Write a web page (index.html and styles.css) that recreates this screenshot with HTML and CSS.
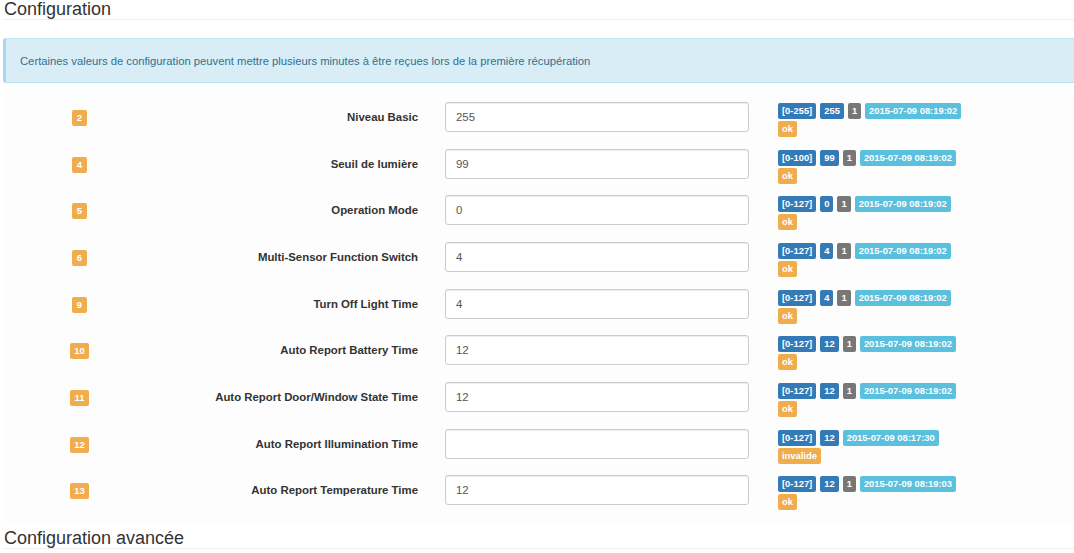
FILE: index.html
```html
<!DOCTYPE html>
<html lang="fr">
<head>
<meta charset="utf-8">
<link rel="stylesheet" href="styles.css">
</head>
<body>
<div class="page">
  <h3 class="title">Configuration</h3>
  <div class="alert">Certaines valeurs de configuration peuvent mettre plusieurs minutes à être reçues lors de la première récupération</div>
  <div class="rows">
    <div class="row"><div class="idx"><span class="lbl warn">2</span></div><div class="name">Niveau Basic</div><div class="field"><div class="input">255</div></div><div class="status"><span class="lbl primary">[0-255]</span><span class="lbl primary">255</span><span class="lbl default">1</span><span class="lbl info">2015-07-09 08:19:02</span><br><span class="lbl warn">ok</span></div></div>
    <div class="row"><div class="idx"><span class="lbl warn">4</span></div><div class="name">Seuil de lumière</div><div class="field"><div class="input">99</div></div><div class="status"><span class="lbl primary">[0-100]</span><span class="lbl primary">99</span><span class="lbl default">1</span><span class="lbl info">2015-07-09 08:19:02</span><br><span class="lbl warn">ok</span></div></div>
    <div class="row"><div class="idx"><span class="lbl warn">5</span></div><div class="name">Operation Mode</div><div class="field"><div class="input">0</div></div><div class="status"><span class="lbl primary">[0-127]</span><span class="lbl primary">0</span><span class="lbl default">1</span><span class="lbl info">2015-07-09 08:19:02</span><br><span class="lbl warn">ok</span></div></div>
    <div class="row"><div class="idx"><span class="lbl warn">6</span></div><div class="name">Multi-Sensor Function Switch</div><div class="field"><div class="input">4</div></div><div class="status"><span class="lbl primary">[0-127]</span><span class="lbl primary">4</span><span class="lbl default">1</span><span class="lbl info">2015-07-09 08:19:02</span><br><span class="lbl warn">ok</span></div></div>
    <div class="row"><div class="idx"><span class="lbl warn">9</span></div><div class="name">Turn Off Light Time</div><div class="field"><div class="input">4</div></div><div class="status"><span class="lbl primary">[0-127]</span><span class="lbl primary">4</span><span class="lbl default">1</span><span class="lbl info">2015-07-09 08:19:02</span><br><span class="lbl warn">ok</span></div></div>
    <div class="row"><div class="idx"><span class="lbl warn">10</span></div><div class="name">Auto Report Battery Time</div><div class="field"><div class="input">12</div></div><div class="status"><span class="lbl primary">[0-127]</span><span class="lbl primary">12</span><span class="lbl default">1</span><span class="lbl info">2015-07-09 08:19:02</span><br><span class="lbl warn">ok</span></div></div>
    <div class="row"><div class="idx"><span class="lbl warn">11</span></div><div class="name">Auto Report Door/Window State Time</div><div class="field"><div class="input">12</div></div><div class="status"><span class="lbl primary">[0-127]</span><span class="lbl primary">12</span><span class="lbl default">1</span><span class="lbl info">2015-07-09 08:19:02</span><br><span class="lbl warn">ok</span></div></div>
    <div class="row"><div class="idx"><span class="lbl warn">12</span></div><div class="name">Auto Report Illumination Time</div><div class="field"><div class="input"></div></div><div class="status"><span class="lbl primary">[0-127]</span><span class="lbl primary">12</span><span class="lbl info">2015-07-09 08:17:30</span><br><span class="lbl warn">invalide</span></div></div>
    <div class="row"><div class="idx"><span class="lbl warn">13</span></div><div class="name">Auto Report Temperature Time</div><div class="field"><div class="input">12</div></div><div class="status"><span class="lbl primary">[0-127]</span><span class="lbl primary">12</span><span class="lbl default">1</span><span class="lbl info">2015-07-09 08:19:03</span><br><span class="lbl warn">ok</span></div></div>
  </div>
  <h3 class="title title2">Configuration avancée</h3>
</div>
</body>
</html>
```

FILE: styles.css
```css
html, body { margin: 0; padding: 0; background: #fff; }
body { font-family: "Liberation Sans", Arial, sans-serif; color: #333; overflow: hidden; }
.page { padding-left: 3px; width: 1090px; }
.title {
  margin: 0;
  font-size: 18px;
  font-weight: normal;
  line-height: 18px;
  padding: 0 0 0 1px;
  height: 19px;
  color: #333;
  border-bottom: 1px solid #eee;
}
.alert {
  margin-top: 18px;
  height: 45px;
  box-sizing: border-box;
  background: #d9edf7;
  border: 1px solid #bce8f1;
  border-left: 3px solid #a9d6ec;
  border-radius: 3px 0 0 3px;
  color: #31708f;
  font-size: 11.25px;
  padding-left: 14px;
  line-height: 45px;
}
.rows { padding-top: 19px; background: #fdfdfd; }
.row {
  display: grid;
  grid-template-columns: 153px 262px 331px 1fr;
  height: 46.66px;
  align-items: start;
}
.idx { display: flex; justify-content: center; padding-top: 8px; }
.idx .lbl { min-width: 7px; text-align: center; padding: 3px 4px; font-size: 9.5px; margin-right: 0; }
.name { text-align: right; font-weight: bold; font-size: 11.4px; padding-top: 9px; }
.input {
  box-sizing: border-box;
  margin-left: 27px;
  width: 304px;
  height: 30px;
  border: 1px solid #ccc;
  border-radius: 3px;
  background: #fff;
  font-size: 11.4px;
  color: #555;
  padding: 0 10px;
  line-height: 29px;
  box-shadow: inset 0 1px 1px rgba(0,0,0,.075);
}
.status { padding-left: 29px; line-height: 10px; padding-top: 1px; }
.lbl {
  display: inline-block;
  font-size: 9.4px;
  font-weight: bold;
  color: #fff;
  line-height: 10px;
  padding: 3px 4px;
  border-radius: 2px;
  margin-right: 4px;
  white-space: nowrap;
}
.status .lbl { margin-bottom: 2px; }
.primary { background: #337ab7; }
.default { background: #777; }
.info { background: #5bc0de; }
.warn { background: #f0ad4e; }
.title2 { margin-top: 7px; }
```
